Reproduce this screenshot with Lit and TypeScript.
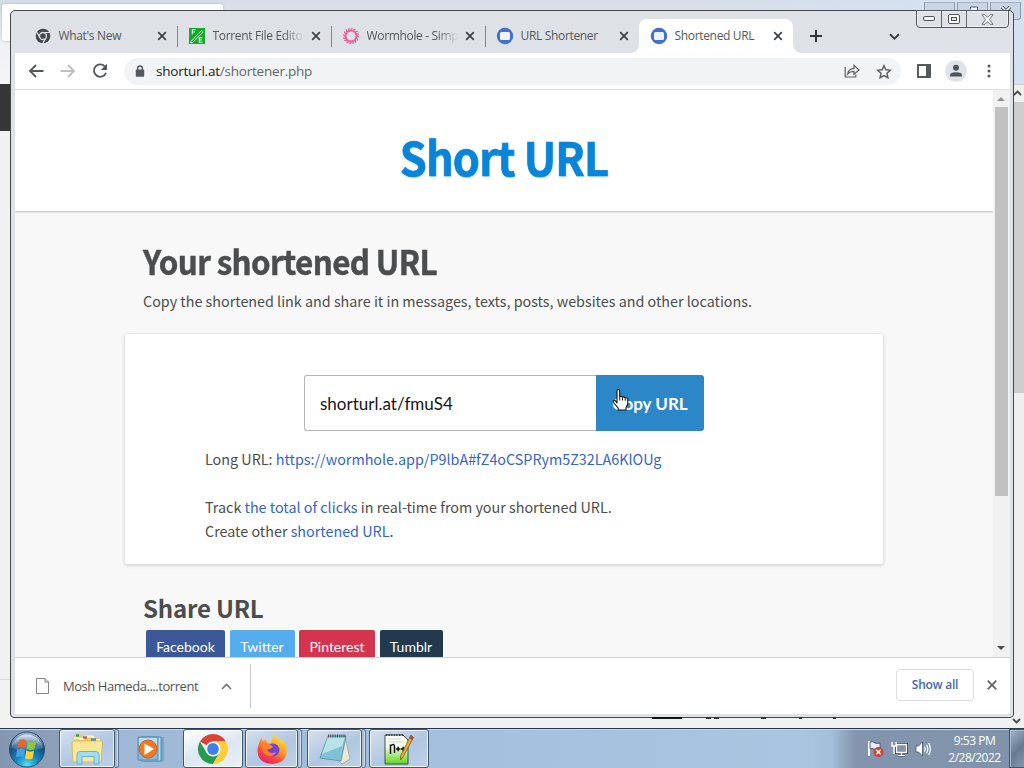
import { LitElement, html, css, svg } from "lit";
import { customElement, property } from "lit/decorators.js";

const iconBase = css`
  svg { display: block; flex: none; }
`;

const chromeGrey = html`<svg width="16" height="16" viewBox="0 0 16 16">
  <circle cx="8" cy="8" r="7.3" fill="#44484c"/>
  <circle cx="8" cy="8" r="3.5" fill="none" stroke="#dee1e6" stroke-width="1.3"/>
  <path d="M8 4.5H15M5 9.8 1.6 3.9M11 9.8 7.6 15.6" stroke="#dee1e6" stroke-width="1.2"/>
</svg>`;

const torrentIcon = html`<svg width="16" height="16" viewBox="0 0 16 16">
  <rect width="16" height="16" fill="#12a92c"/>
  <path d="M2 13.4 12.4 2.6 14 4.2 3.6 14.6 1.8 15Z" fill="none" stroke="#d5f5d8" stroke-width="1"/>
  <path d="M3.3 6.5V1.8H6.6M3.3 4H6M13.5 9.8H10.3V14.3H13.6M10.3 12H13" fill="none" stroke="#d5f5d8" stroke-width="1.1"/>
</svg>`;

const wormholeIcon = html`<svg width="18" height="18" viewBox="0 0 18 18">
  <g fill="none" stroke="#e8488f" stroke-width="1.05">
    ${Array.from({ length: 16 }, (_, i) => svg`<path d="M9 4.3Q11.5 3.2 13.4 2.2" transform="rotate(${i * 22.5} 9 9)"/>`)}
    <circle cx="9" cy="9" r="5.6" stroke-width="1.5" stroke="#ec5f9d"/>
  </g>
</svg>`;

const linkIcon = html`<svg width="18" height="18" viewBox="0 0 18 18">
  <circle cx="9" cy="9" r="8.2" fill="#3f6fd1"/>
  <rect x="4" y="5" width="10" height="8" rx="1.5" fill="#eef3ff"/>
</svg>`;

const closeIcon = html`<svg width="10" height="10" viewBox="0 0 10 10">
  <path d="M1.2 1.2 8.8 8.8M8.8 1.2 1.2 8.8" stroke="#3c4043" stroke-width="1.7"/>
</svg>`;

@customElement("browser-tab")
class BrowserTab extends LitElement {
  @property() label = "";
  @property({ attribute: false }) icon: unknown;
  @property({ type: Boolean }) active = false;
  @property({ type: Boolean }) fade = false;
  @property({ type: Boolean }) divider = false;
  static styles = [iconBase, css`
    :host { display: block; width: 154px; flex: none; height: 34px; box-sizing: border-box; }
    .tab { display: flex; align-items: center; height: 34px; padding: 0 10px 0 11px; position: relative; }
    .active { background: #fff; border-radius: 8px 8px 0 0; }
    .active::before, .active::after { content: ""; position: absolute; bottom: 0; width: 8px; height: 8px; }
    .active::before { left: -8px; background: radial-gradient(circle at 0 0, transparent 7.5px, #fff 8px); }
    .active::after { right: -8px; background: radial-gradient(circle at 100% 0, transparent 7.5px, #fff 8px); }
    .icon { width: 18px; display: flex; justify-content: center; margin-right: 6.5px; }
    .label { flex: 1; white-space: nowrap; font: 12px/18px "Open Sans", sans-serif; color: #54585c; letter-spacing: -0.33px; }
    .fade { -webkit-mask-image: linear-gradient(90deg, #000 70px, transparent 92px); mask-image: linear-gradient(90deg, #000 70px, transparent 92px); }
    .close { width: 10px; margin-left: 6px; }
    .divider { position: absolute; right: -1px; top: 7px; width: 1px; height: 21px; background: #85888c; }
  `];
  render() {
    return html`<div class="tab ${this.active ? "active" : ""}">
      <span class="icon">${this.icon}</span>
      <span class="label ${this.fade ? "fade" : ""}">${this.label}</span>
      <span class="close">${closeIcon}</span>
      ${this.divider ? html`<i class="divider"></i>` : ""}
    </div>`;
  }
}

@customElement("short-url-page")
class ShortUrlPage extends LitElement {
  static styles = css`
    :host { display: block; flex: 1; height: 567px; overflow: hidden; background: #f8f8f8; color: #4b4d4e; font-family: "Noto Sans CJK SC", "Source Sans Pro", sans-serif; }
    .top { height: 121px; box-sizing: border-box; background: #fff; box-shadow: 0 1px 2px rgba(0,0,0,.25); display: flex; justify-content: center; align-items: center; padding-top: 11px; }
    .brand { font-size: 46px; line-height: 60px; font-weight: 700; color: #0a84d8; letter-spacing: -0.8px; white-space: nowrap; transform: scaleX(.94); -webkit-text-stroke: .7px #0a84d8; text-shadow: 1px 1px 2px rgba(10,132,216,.3); }
    .intro { padding: 30px 0 0 128px; }
    h1 { margin: 0; font-size: 34px; line-height: 40px; font-weight: 700; letter-spacing: -0.7px; white-space: nowrap; transform: scaleX(.924); transform-origin: 0 50%; -webkit-text-stroke: .5px #4b4d4e; }
    .intro p { margin: 8px 0 0; font-size: 14.33px; line-height: 24px; white-space: nowrap; }
    .card { width: 758px; height: 230px; box-sizing: border-box; margin: 21px 0 0 110px; background: #fff; border-radius: 2px; box-shadow: 0 1px 4px rgba(0,0,0,.2); padding: 41px 0 0 80px; }
    .field { display: flex; margin-left: 99px; height: 56px; width: 400px; }
    .value { width: 292px; box-sizing: border-box; border: 1px solid #b5b5b5; border-right: 0; border-radius: 3px 0 0 3px; padding-left: 15px; font: 17px/55px Lato, sans-serif; color: #161616; }
    .copy { flex: 1; background: #2b87c8; border-radius: 0 3px 3px 0; color: #fff; font: 700 17px/57px Lato, sans-serif; text-align: center; white-space: nowrap; }
    .info { font-size: 14.33px; line-height: 24px; white-space: nowrap; }
    .long { margin: 16px 0 24px; }
    a { color: #3464cf; text-decoration: none; }
    h2 { margin: 28px 0 0 128px; font-size: 24px; line-height: 32px; font-weight: 700; letter-spacing: -0.2px; }
    .share { display: flex; gap: 4.5px; margin: 6px 0 0 131px; }
    .share span { height: 34px; border-radius: 2px; color: #fff; font: 14px/34px Lato, sans-serif; text-align: center; white-space: nowrap; }
    .fb { width: 79px; background: #3b5998; }
    .tw { width: 65px; background: #55acee; }
    .pi { width: 76px; background: #d5344f; }
    .tu { width: 63px; background: #23394d; }
  `;
  render() {
    return html`
      <div class="top"><span class="brand">Short URL</span></div>
      <div class="intro">
        <h1>Your shortened URL</h1>
        <p>Copy the shortened link and share it in messages, texts, posts, websites and other locations.</p>
      </div>
      <div class="card">
        <div class="field"><div class="value">shorturl.at/fmuS4</div><div class="copy">Copy URL</div></div>
        <div class="info long">Long URL: <a>https://wormhole.app/P9lbA#fZ4oCSPRym5Z32LA6KlOUg</a></div>
        <div class="info">Track <a>the total of clicks</a> in real-time from your shortened URL.</div>
        <div class="info">Create other <a>shortened URL</a>.</div>
      </div>
      <h2>Share URL</h2>
      <div class="share"><span class="fb">Facebook</span><span class="tw">Twitter</span><span class="pi">Pinterest</span><span class="tu">Tumblr</span></div>`;
  }
}

@customElement("win-taskbar")
class WinTaskbar extends LitElement {
  static styles = [iconBase, css`
    :host { display: flex; box-sizing: border-box; height: 40px; border-top: 1px solid #26384f; box-shadow: inset 0 1px 0 #c5d6e8; background: linear-gradient(90deg, #8496b1 0, #8d9fb9 56px, #a0b8d5 120px, #a5bfdf 440px, #a9c5e0 800px, #a6c0dc 830px, #8395ae 855px, #8193ab 100%); }
    .start { width: 59px; display: flex; align-items: center; padding-left: 8px; box-sizing: border-box; }
    .slot { box-sizing: border-box; display: flex; justify-content: center; align-items: center; height: 39px; flex: none; border-radius: 3px; }
    .open { border: 1px solid #43566f; box-shadow: inset 0 0 0 1px rgba(255,255,255,.75); background: linear-gradient(150deg, #d4e0ef, #b0c6e1 55%, #bfd1e8); }
    .on { background: linear-gradient(160deg, #fff, #dce7f3 50%, #e9f0f9); }
    .stack { border: 1px solid #5f748e; border-left: 0; border-radius: 0 3px 3px 0; box-shadow: inset -1px 0 0 #d2deec; }
    .tray { margin-left: auto; display: flex; align-items: center; gap: 7px; }
    .clock { font: 12px/17px "Open Sans", sans-serif; letter-spacing: -0.5px; text-align: center; color: #fff; width: 61px; margin: 1px 0 0 5px; white-space: nowrap; }
    .peek { align-self: stretch; width: 15px; margin-left: -3px; box-sizing: border-box; border: 1px solid #44546a; border-right: 0; box-shadow: inset 1px 1px 0 #aabbd0; background: linear-gradient(135deg, #a5b4c7, #667991 55%, #8497ad); }
    .w60 { width: 56px; } .w4 { width: 4px; } .w62 { width: 64px; } .w59 { width: 60px; } .w53 { width: 53px; } .w55 { width: 55px; } .np { width: 60px; }
    .g2 { margin-left: 2px; } .g3 { margin-left: 3px; } .g5 { margin-left: 5px; }
  `];
  render() {
    return html`
      <div class="start"><svg width="37" height="38" viewBox="0 0 37 38">
        <defs>
          <radialGradient id="orb" cx=".5" cy=".95" r=".95"><stop offset="0" stop-color="#52e2fa"/><stop offset=".35" stop-color="#1586bd"/><stop offset=".7" stop-color="#164c7c"/><stop offset="1" stop-color="#adc4d6"/></radialGradient>
          <linearGradient id="gloss" x2="0" y2="1"><stop stop-color="#eef5fb" stop-opacity=".8"/><stop offset="1" stop-color="#b3cee0" stop-opacity=".12"/></linearGradient>
        </defs>
        <circle cx="19" cy="19.5" r="17.5" fill="url(#orb)" stroke="#2c4d6b"/>
        <path d="M3.2 18A16 16 0 0 1 34.8 18Q19 24 3.2 18Z" fill="url(#gloss)"/>
        <path d="M11 10.5Q14 8 18.2 10.4L17 18.2Q13 16 9.3 18.2Z" fill="#ee6427"/>
        <path d="M19.8 11Q23.5 13.2 28 11.4L26.4 19Q22.5 21 18.6 18.8Z" fill="#8bc63e"/>
        <path d="M9 19.8Q13 17.8 16.8 19.8L15.5 27.4Q12 25.6 7.8 27.4Z" fill="#3fa2e6"/>
        <path d="M18.3 20.5Q22 22.6 26 20.8L24.6 28.4Q20.5 30.2 17 28.2Z" fill="#fbd034"/>
      </svg></div>
      <div class="slot open w60"><svg width="36" height="34" viewBox="0 0 36 34">
        <path d="M5 4Q5 2.5 7 2.5H12L14 6H29Q31 6 31 8V29H5Z" fill="#e7ca67"/>
        <path d="M5 6 14 7 17 4.5H24L26 8H31" fill="none" stroke="#fff6c8" stroke-width="2"/>
        <path d="M3 11Q3 9 5 9H32Q34 9 33.5 11L32 30H4Z" fill="#f8e795" stroke="#d4b753" stroke-width=".8"/>
        <path d="M7 3.5H10" stroke="#31a256" stroke-width="2.4"/><path d="M14 5.5H18" stroke="#d55a3d" stroke-width="2.4"/><path d="M22 7.5H27" stroke="#4589c9" stroke-width="2.4"/>
        <path d="M8 32V23Q8 19.5 11 19.5H27Q30 19.5 30 23V32H25V24.5H13V32Z" fill="#9edcf4" stroke="#5caed3" stroke-width=".9"/>
      </svg></div>
      <div class="slot stack w4"></div>
      <div class="slot w62"><svg width="30" height="28" viewBox="0 0 30 28">
        <path d="M8 2H28V25L26 27H8Z" fill="#74a6c6"/><path d="M5 2H25V26H5Z" fill="#b4dcf0" stroke="#538cad"/>
        <path d="M2 2H22V25H2Z" fill="#7dbbdf" stroke="#4c8ebb"/><path d="M3 3H21V11L3 18Z" fill="#b5e0f3"/>
        <circle cx="12" cy="14" r="9" fill="#f27821" stroke="#d75d11"/><path d="M8.5 8.5 18 14 8.5 20Z" fill="#fff"/>
      </svg></div>
      <div class="slot open on w59"><svg width="32" height="32" viewBox="0 0 32 32">
        <path d="M16 16 3 8.5A15 15 0 0 1 29 8.5H16Z" fill="#d94436"/>
        <path d="M16 16 9.5 19.7 3 8.5A15 15 0 0 0 16 31L22.5 19.7Z" fill="#269b50"/>
        <path d="M16 8.5H29A15 15 0 0 1 16 31L22.5 19.7Z" fill="#fdce38"/>
        <circle cx="16" cy="16" r="7.5" fill="#fff"/><circle cx="16" cy="16" r="5.9" fill="#3f7fe8"/>
      </svg></div>
      <div class="slot open w53 g2"><svg width="32" height="32" viewBox="0 0 32 32">
        <defs><linearGradient id="fox" x1=".9" y1="0" x2=".3" y2="1"><stop stop-color="#fff047"/><stop offset=".4" stop-color="#ffac2b"/><stop offset=".75" stop-color="#f9473a"/><stop offset="1" stop-color="#df2670"/></linearGradient></defs>
        <path d="M2.5 12Q3 8 5.5 5L7 8 10 6Q10 9 13 10Q16 10 16 6Q16 3 19 1Q20 6 24 8Q25 6 24 5Q31 10 31 18Q30 30 17 31Q3 31 1.5 19Q1 15 2.5 12Z" fill="url(#fox)"/>
        <circle cx="17" cy="17" r="6.5" fill="#7048cf"/><path d="M5 12Q9 9 15 12L17 14Q14 17 11 16Q13 22 20 19Q17 25 10 22Q6 19 5 12Z" fill="#ff802f"/>
      </svg></div>
      <div class="slot stack w4"></div>
      <div class="slot open w55 g5"><svg width="34" height="32" viewBox="0 0 34 32">
        <path d="M27 4 32 26 24 31 21 28Z" fill="#e7e7dc" stroke="#a69b7b" stroke-width=".7"/>
        <path d="M10 3H28L23 28 2 25Z" fill="#80c2d3" stroke="#558f9f" stroke-width=".8"/><path d="M10 4H27L24 13 4 21Z" fill="#b9e2e9"/>
        <path d="M10 3H28" stroke="#555" stroke-width="3" stroke-dasharray="1.2 1"/>
      </svg></div>
      <div class="slot stack w4"></div>
      <div class="slot open np g3"><svg width="32" height="34" viewBox="0 0 32 34">
        <defs><linearGradient id="pad" x2="0" y2="1"><stop stop-color="#fff"/><stop offset=".4" stop-color="#f0fbe8"/><stop offset="1" stop-color="#5ed51c"/></linearGradient></defs>
        <path d="M2 3H20L25 8V32H2Z" fill="url(#pad)" stroke="#3e543b"/><path d="M3 3H20" stroke="#222" stroke-width="1.6" stroke-dasharray="1.3 1.3"/>
        <path d="M5 7H18M5 10H21" stroke="#bdc8c0" stroke-width=".7"/>
        <path d="M7.5 22V12.5M7.5 14Q11.5 10.5 11.5 15V21M13 17H17.5M15.2 14.8V19.2M18 17H22.5M20.2 14.8V19.2" fill="none" stroke="#111" stroke-width="1.5"/>
        <path d="M28 3 30.5 5.5 20 25 17.5 28 17.5 24Z" fill="#e9ac32" stroke="#7d591b" stroke-width=".8"/><path d="M28 3 30.5 5.5 29 8 26.5 6Z" fill="#a84f38"/>
      </svg></div>
      <div class="tray">
        <svg width="17" height="18" viewBox="0 0 17 18"><path d="M2 1V16" stroke="#fff" stroke-width="2"/><path d="M3 2Q6 1 8 3Q10 4 13 3V10Q9 12 7 9Q5 8 3 9Z" fill="#e8edf2" stroke="#36475c" stroke-width=".8"/><circle cx="11.5" cy="12" r="5" fill="#d43c38"/><path d="M9.3 9.8 13.7 14.2M13.7 9.8 9.3 14.2" stroke="#fff" stroke-width="1.5"/></svg>
        <svg width="17" height="16" viewBox="0 0 17 16"><path d="M5.5 3.5H15.5V11.5H5.5ZM7 14.5H14M10.5 11.5V14" fill="#728297" stroke="#2c3b4d" stroke-width="3"/><path d="M5.5 3.5H15.5V11.5H5.5ZM7 14.5H14M10.5 11.5V14" fill="#8292a8" stroke="#fff" stroke-width="1.3"/><path d="M1 1V5H5V1M3 5V13" fill="none" stroke="#fff" stroke-width="1.4"/></svg>
        <svg width="17" height="16" viewBox="0 0 17 16"><path d="M1 5H3.5L7.5 1V15L3.5 11H1Z" fill="#fff" stroke="#41536a" stroke-width=".8"/><path d="M9.5 5.5Q11 8 9.5 10.5M11.6 3.7Q14 8 11.6 12.3M13.7 2Q17 8 13.7 14" fill="none" stroke="#fff" stroke-width="1.2"/></svg>
        <div class="clock">9:53 PM<br>2/28/2022</div>
        <div class="peek"></div>
      </div>`;
  }
}

@customElement("app-root")
class AppRoot extends LitElement {
  static styles = [iconBase, css`
    :host { display: block; position: relative; width: 1024px; height: 768px; overflow: hidden; background: #f1f1f1; font-family: "Open Sans", sans-serif; }
    .desktop { height: 728px; box-sizing: border-box; display: flex; flex-direction: column; }
    .back-title { height: 84px; flex: none; background: linear-gradient(90deg, transparent 700px, #d4e1f3 1000px), linear-gradient(#d5dce6, #edf0f5 45%, #f5f5f6); display: flex; }
    .back-tab { margin: 4px 0 0 2px; width: 221px; height: 37px; border-radius: 3px; background: #fdfdfe; box-shadow: 0 0 3px #aeb6c2; }
    .back-dark { height: 47px; width: 11px; background: #363636; }
    .back-rule { flex: 1; display: flex; align-items: flex-end; }
    .back-low { width: 20px; height: 48px; border-top: 1px solid #d6d6d6; background: #f2f2f2; }
    .back-scroll { position: absolute; left: 1013px; top: 84px; width: 11px; height: 644px; background: #efefef; display: flex; flex-direction: column; align-items: center; border-top: 1px solid #c8c8c8; box-sizing: border-box; }
    .back-scroll svg { margin: 5px 3px 0 0; }
    .back-thumb { width: 11px; height: 291px; margin-top: 6px; background: #cdcdcd; }
    .back-scroll .down { margin: auto 5px 4px 0; }
    .back-btns { position: absolute; right: 3px; top: 2px; display: flex; gap: 2px; }
    .back-btns span { width: 29px; height: 16px; border: 1px solid #8d9aac; border-top-color: #a6b2c2; border-radius: 0 0 3px 3px; background: #c9d5e5; display: flex; justify-content: center; align-items: center; }
    .marks { position: absolute; left: 652px; top: 717px; display: flex; height: 2px; z-index: 3; }
    .marks i { background: #333; height: 2px; }
    .marks .m0 { width: 30px; background: #111; }
    .marks .m1 { width: 5px; margin-left: 24px; } .marks .m2 { width: 5px; margin-left: 3px; } .marks .m3 { width: 5px; margin-left: 42px; } .marks .m4 { width: 3px; margin-left: 33px; } .marks .m5 { width: 3px; margin-left: 31px; }
    .window { position: absolute; left: 10px; top: 10px; width: 1004px; height: 708px; box-sizing: border-box; border: 1px solid #45484b; border-radius: 5px 5px 4px 4px; background: #dee1e6; padding: 0 3px 3px 4px; display: flex; flex-direction: column; }
    .tabs { display: flex; height: 42px; flex: none; padding: 8px 0 0 8px; box-sizing: border-box; }
    .tabs .new { margin: 11px 0 0 17px; }
    .tabs .more { margin: 14px 0 0 67px; }
    .ctl { position: absolute; right: 4px; top: -1px; display: flex; height: 16px; border: 1px solid #54575b; border-radius: 0 0 4px 4px; box-shadow: inset 0 0 0 1px #eef0f2; width: 91px; }
    .ctl span { box-sizing: border-box; display: flex; align-items: center; justify-content: center; width: 25px; border-right: 1px solid #65686c; }
    .ctl span:last-child { border: 0; width: 41px; }
    .bar { height: 37px; flex: none; background: #fff; border-bottom: 1px solid #dddfe1; box-sizing: border-box; display: flex; align-items: center; padding-left: 13px; }
    .bar .fwd { margin-left: 16px; } .bar .reload { margin-left: 16px; }
    .omni { margin-left: 16px; width: 777px; height: 27px; border-radius: 14px; background: #f1f3f4; display: flex; align-items: center; box-sizing: border-box; padding-left: 11px; }
    .url { font-size: 13.5px; line-height: 20px; color: #63676b; margin-left: 11px; letter-spacing: -0.22px; flex: 1; white-space: nowrap; }
    .url b { font-weight: 400; color: #1f2124; }
    .omni .star { margin: 0 9px 0 16px; }
    .bar .side { margin-left: 16px; } .bar .user { margin-left: 14px; } .bar .dots { margin-left: 20px; }
    .view { display: flex; height: 567px; flex: none; background: #fff; }
    .scroll { width: 17px; box-sizing: border-box; background: #f1f1f1; display: flex; flex-direction: column; align-items: center; padding: 7px 1px 7px 0; }
    .thumb { width: 13px; height: 389px; margin-top: 6px; background: #c1c1c1; }
    .scroll .down { margin-top: auto; }
    .dl { flex: 1; background: #fff; border-top: 1px solid #cfd1d3; display: flex; align-items: center; }
    .dl .file { margin-left: 21px; }
    .name { font-size: 13px; line-height: 20px; color: #505356; margin-left: 14px; width: 135px; white-space: nowrap; letter-spacing: -0.45px; }
    .dl .up { margin-left: 23px; }
    .dl .line { width: 1px; height: 44px; background: #c8cacc; margin-left: 18px; }
    .show { box-sizing: border-box; margin-left: auto; width: 78px; height: 32px; margin-bottom: 2px; border: 1px solid #dadce0; border-radius: 4px; font: 600 12px/30px "Open Sans", sans-serif; color: #4367bc; text-align: center; letter-spacing: -0.2px; }
    .dl .x { margin: 0 13px 2px 13px; }
    .cursor { position: absolute; left: 612px; top: 388px; z-index: 4; }
  `];
  render() {
    return html`
      <div class="desktop">
        <div class="back-title"><div class="back-tab"></div></div>
        <div class="back-dark"></div>
        <div class="back-rule"><div class="back-low"></div></div>
      </div>
      <div class="back-btns">
        <span></span>
        <span><svg width="12" height="10"><path d="M3.5 3.5V1H10.5V7H8M1.5 4.5H8V9H1.5Z" fill="#f5f7fa" stroke="#4c5a6c"/></svg></span>
        <span><svg width="12" height="10"><path d="M2 1 10 9M10 1 2 9" stroke="#4c5a6c" stroke-width="3.4"/><path d="M2 1 10 9M10 1 2 9" stroke="#fff" stroke-width="1.6"/></svg></span>
      </div>
      <div class="back-scroll">
        <svg width="9" height="6"><path d="M1 5 4.5 1.5 8 5" fill="none" stroke="#4a4a4a" stroke-width="1.8"/></svg>
        <div class="back-thumb"></div>
        <svg class="down" width="9" height="6"><path d="M1 1 4.5 4.5 8 1" fill="none" stroke="#4a4a4a" stroke-width="1.8"/></svg>
      </div>
      <div class="window">
        <div class="ctl">
          <span><svg width="13" height="6"><rect x=".5" y=".5" width="11" height="4" rx="1.5" fill="#fff" stroke="#505357"/></svg></span>
          <span><svg width="12" height="10"><rect x=".5" y=".5" width="11" height="9" rx="1.5" fill="#fff" stroke="#505357"/><rect x="3.5" y="3.5" width="5" height="3" fill="#dee1e6" stroke="#505357"/></svg></span>
          <span><svg width="13" height="11" viewBox="0 0 13 11"><path d="M1 .7H4L6.5 3.4 9 .7H12L8.4 5.5 12 10.3H9L6.5 7.6 4 10.3H1L4.6 5.5Z" fill="#fff" stroke="#606367" stroke-width=".9"/></svg></span>
        </div>
        <div class="tabs">
          <browser-tab label="What's New" .icon=${chromeGrey} divider></browser-tab>
          <browser-tab label="Torrent File Edito" .icon=${torrentIcon} fade divider></browser-tab>
          <browser-tab label="Wormhole - Simp" .icon=${wormholeIcon} fade divider></browser-tab>
          <browser-tab label="URL Shortener" .icon=${linkIcon}></browser-tab>
          <browser-tab label="Shortened URL" .icon=${linkIcon} active></browser-tab>
          <svg class="new" width="12" height="12"><path d="M6 0V12M0 6H12" stroke="#33373a" stroke-width="2"/></svg>
          <svg class="more" width="11" height="8"><path d="M1 1.2 5.5 5.7 10 1.2" fill="none" stroke="#3c4043" stroke-width="2"/></svg>
        </div>
        <div class="bar">
          <svg width="16" height="14" viewBox="0 0 16 14"><path d="M15.5 7H2M8 1 2 7 8 13" fill="none" stroke="#54585c" stroke-width="1.8"/></svg>
          <svg class="fwd" width="16" height="14" viewBox="0 0 16 14"><path d="M.5 7H14M8 1 14 7 8 13" fill="none" stroke="#bdbfc1" stroke-width="1.8"/></svg>
          <svg class="reload" width="16" height="16" viewBox="0 0 16 16"><path d="M13.2 4A6.2 6.2 0 1 0 14 9.7" fill="none" stroke="#54585c" stroke-width="1.9"/><path d="M15 .8V7H8.8Z" fill="#54585c"/></svg>
          <div class="omni">
            <svg width="10" height="13" viewBox="0 0 10 13"><path d="M2.6 5V3.2Q2.6 1 5 1T7.4 3.2V5" fill="none" stroke="#54585c" stroke-width="1.4"/><rect x=".8" y="4.6" width="8.4" height="7.2" rx=".9" fill="#54585c"/></svg>
            <span class="url"><b>shorturl.at</b>/shortener.php</span>
            <svg width="16" height="14" viewBox="0 0 16 14"><path d="M1.2 3V13H11.8V10.5M3.6 10Q4.5 4.6 10 4.4V1.3L15 6 10 10.2V7.3Q6 7.2 3.6 10Z" fill="none" stroke="#5c6064" stroke-width="1.2"/></svg>
            <svg class="star" width="16" height="15" viewBox="0 0 16 15"><path d="M8 1.7 9.9 5.8 14.3 6.3 11 9.3 11.9 13.7 8 11.5 4.1 13.7 5 9.3 1.7 6.3 6.1 5.8Z" fill="none" stroke="#5c6064" stroke-width="1.5"/></svg>
          </div>
          <svg class="side" width="14" height="14"><path d="M1 1H13V13H1Z" fill="none" stroke="#54585c" stroke-width="1.9"/><path d="M9 1H14V13H9Z" fill="#54585c"/></svg>
          <svg class="user" width="22" height="22"><circle cx="11" cy="11" r="10.8" fill="#dfe2e6"/><circle cx="11" cy="7.8" r="3" fill="#4b5660"/><path d="M5 16.5V14.8Q5 12.2 11 12.2T17 14.8V16.5Z" fill="#4b5660"/></svg>
          <svg class="dots" width="4" height="14"><circle cx="2" cy="2" r="1.5" fill="#54585c"/><circle cx="2" cy="7" r="1.5" fill="#54585c"/><circle cx="2" cy="12" r="1.5" fill="#54585c"/></svg>
        </div>
        <div class="view">
          <short-url-page></short-url-page>
          <div class="scroll">
            <svg width="8" height="4"><path d="M0 4 4 0 8 4Z" fill="#939393"/></svg>
            <div class="thumb"></div>
            <svg class="down" width="8" height="4"><path d="M0 0H8L4 4Z" fill="#4b4b4b"/></svg>
          </div>
        </div>
        <div class="dl">
          <svg class="file" width="13" height="16" viewBox="0 0 13 16"><path d="M.5.5H9L12.5 4V15.5H.5Z" fill="#fcfcfc" stroke="#858585"/><path d="M9 .5V4H12.5" fill="none" stroke="#858585"/></svg>
          <span class="name">Mosh Hameda....torrent</span>
          <svg class="up" width="11" height="7"><path d="M1 6 5.5 1.5 10 6" fill="none" stroke="#707376" stroke-width="1.6"/></svg>
          <i class="line"></i>
          <span class="show">Show all</span>
          <svg class="x" width="10" height="10" viewBox="0 0 10 10"><path d="M.7.7 9.3 9.3M9.3.7.7 9.3" stroke="#606367" stroke-width="1.7"/></svg>
        </div>
      </div>
      <div class="marks"><i class="m0"></i><i class="m1"></i><i class="m2"></i><i class="m3"></i><i class="m4"></i><i class="m5"></i></div>
      <svg class="cursor" width="18" height="24" viewBox="0 0 18 24"><path d="M5 15V3.2Q5 1.5 6.3 1.5T7.7 3.2V9Q9 7.6 10.5 9.2Q12 8.2 13.2 9.9Q15.8 9.4 15.8 12V16L14 19.5V22H6.2V20L1.5 14.5Q.8 12 3 12.2Z" fill="#fff" stroke="#111" stroke-width="1.1" stroke-linejoin="round"/><path d="M7.7 9V12.5M10.5 9.5V12.5M13.2 10.2V12.7" stroke="#222"/></svg>
      <win-taskbar></win-taskbar>`;
  }
}
